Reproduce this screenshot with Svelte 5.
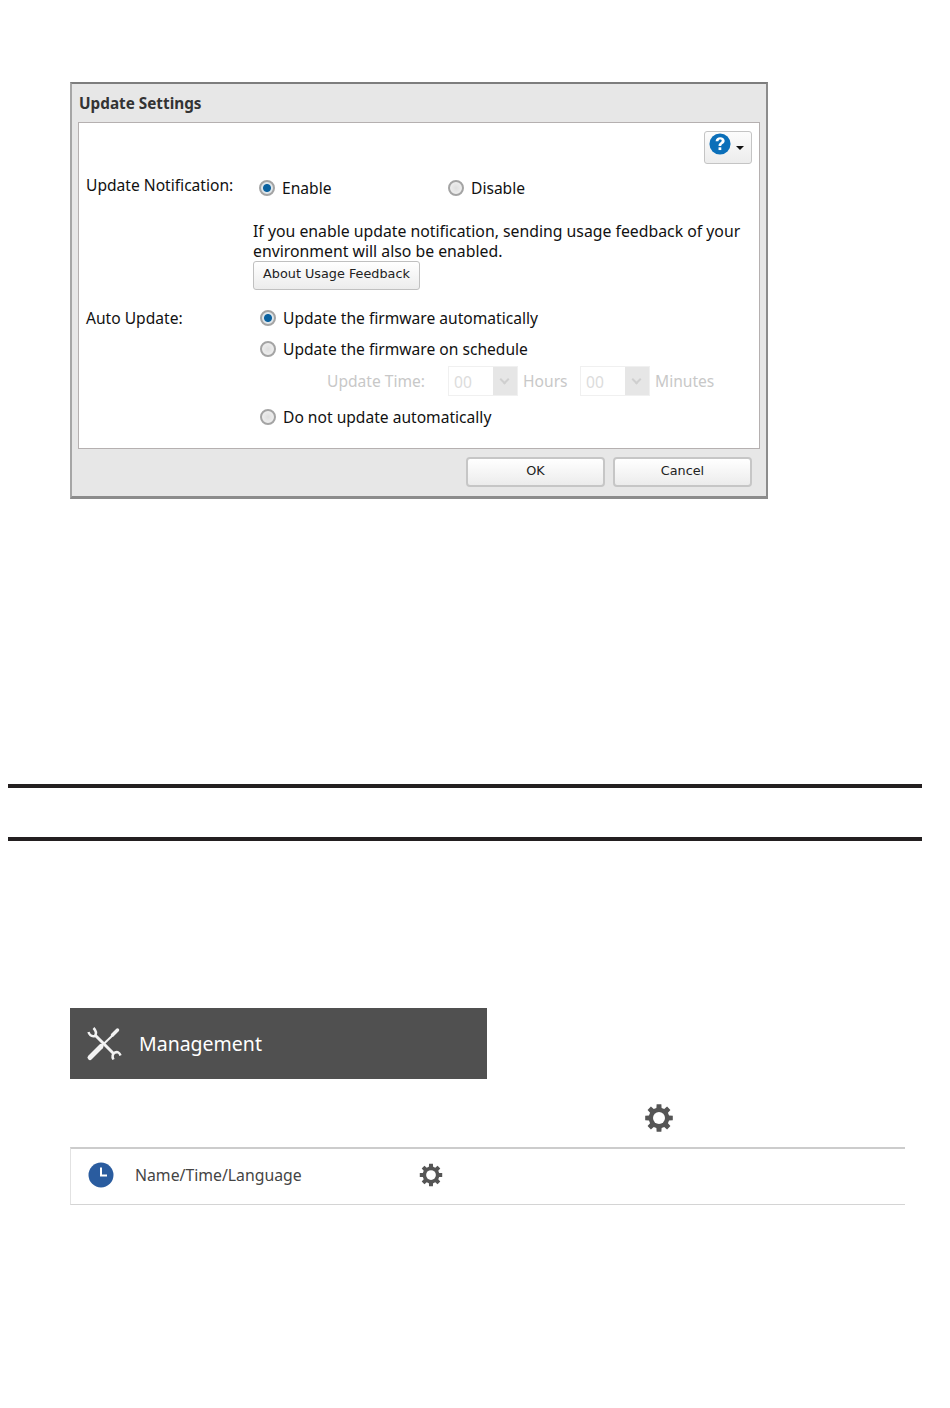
<script>
	// eight tooth gear, outer radius r, centred on 0,0
	function gearPath(r) {
		const inner = r * 0.74;
		const teeth = 8;
		const pts = [];
		for (let i = 0; i < teeth; i++) {
			const a = (i / teeth) * Math.PI * 2;
			const w = 0.17;
			pts.push([Math.cos(a - w * 1.5) * inner, Math.sin(a - w * 1.5) * inner]);
			pts.push([Math.cos(a - w) * r, Math.sin(a - w) * r]);
			pts.push([Math.cos(a + w) * r, Math.sin(a + w) * r]);
			pts.push([Math.cos(a + w * 1.5) * inner, Math.sin(a + w * 1.5) * inner]);
		}
		return "M" + pts.map((p) => p[0].toFixed(2) + " " + p[1].toFixed(2)).join("L") + "Z";
	}
	const gear = gearPath(14);
</script>

<div class="page">
	<section class="dialog">
		<h1 class="dialog_title">Update Settings</h1>
		<div class="dialog_body">
			<div class="help_row">
				<button class="help_button">
					<svg class="help_icon" width="22" height="22" viewBox="0 0 24 24">
						<circle cx="12" cy="12" r="11.5" fill="#0b6fb9" />
						<path d="M7.2 9c.2-3 2.300-4.500 5-4.500 2.900 0 4.900 1.600 4.900 3.900 0 1.800-1 2.700-2.400 3.600-1 .7-1.300 1.100-1.300 2.300h-3c0-2.200.7-3.100 2-4 1-.6 1.500-1.100 1.500-1.800 0-.8-.7-1.300-1.700-1.300s-1.800.7-1.900 1.800z" fill="#fff" />
						<rect x="10.400" y="15.600" width="3" height="3" fill="#fff" />
					</svg>
					<span class="caret"></span>
				</button>
			</div>

			<div class="form_row notification">
				<div class="field_label">Update Notification:</div>
				<div class="field_controls">
					<div class="radio_pair">
						<label class="radio_item enable"><span class="radio checked"></span>Enable</label>
						<label class="radio_item"><span class="radio"></span>Disable</label>
					</div>
					<p class="note">If you enable update notification, sending usage feedback of your environment will also be enabled.</p>
					<button class="small_button feedback">About Usage Feedback</button>
				</div>
			</div>

			<div class="form_row auto_update">
				<div class="field_label">Auto Update:</div>
				<div class="field_controls options">
					<label class="radio_item"><span class="radio checked"></span>Update the firmware automatically</label>
					<label class="radio_item"><span class="radio"></span>Update the firmware on schedule</label>
					<div class="time_row">
						<span class="time_label">Update Time:</span>
						<span class="select"><span class="select_value">00</span><span class="select_arrow"></span></span>
						<span class="unit">Hours</span>
						<span class="select"><span class="select_value">00</span><span class="select_arrow"></span></span>
						<span class="unit">Minutes</span>
					</div>
					<label class="radio_item"><span class="radio"></span>Do not update automatically</label>
				</div>
			</div>
		</div>
		<div class="dialog_footer">
			<button class="small_button action">OK</button>
			<button class="small_button action">Cancel</button>
		</div>
	</section>

	<div class="rules"></div>

	<div class="management">
		<svg width="40" height="40" viewBox="0 0 40 40">
			<g fill="none" stroke="#f2f2f2">
				<path d="M11 11 L30 30" stroke-width="3" />
				<path d="M4.500 8 Q6 13 11 12 Q13.500 8 9.500 4 M29.500 35.500 Q27 31 31 28.500 Q35 27 36.500 31.500" stroke-width="2.500" />
				<path d="M6 33.500 L17 22.500" stroke-width="5" stroke-linecap="round" />
				<path d="M17 22.500 L29 11" stroke-width="2" />
				<path d="M28.500 11 L33.500 6" stroke-width="3.500" stroke-linecap="round" />
			</g>
		</svg>
		<span>Management</span>
	</div>

	<div class="gear_line">
		<svg width="32" height="32" viewBox="-16 -16 32 32">
			<path d={gear} fill="#555" />
			<circle r="6" fill="#fff" />
		</svg>
	</div>

	<div class="setting_row">
		<svg class="clock" width="26" height="26" viewBox="0 0 26 26">
			<circle cx="13" cy="13" r="12.500" fill="#2a5c9f" />
			<path d="M13 5.500 V13.500 H19" fill="none" stroke="#fff" stroke-width="2" />
		</svg>
		<span class="setting_name">Name/Time/Language</span>
		<svg width="26" height="26" viewBox="-16 -16 32 32">
			<path d={gear} fill="#555" />
			<circle r="6" fill="#fff" />
		</svg>
	</div>
</div>

<style>
	:global(body) {
		margin: 0;
		background: #fff;
	}

	.page {
		height: 1408px;
		box-sizing: border-box;
		padding-top: 82px;
		font-family: "Noto Sans", sans-serif;
		color: #111;
		overflow: hidden;
	}

	.dialog {
		box-sizing: border-box;
		width: 698px;
		height: 417px;
		margin-left: 70px;
		display: flex;
		flex-direction: column;
		padding: 0 6px;
		background: #e7e7e7;
		border-top: 2px solid #7d7d7d;
		border-right: 2px solid #8c8c8c;
		border-bottom: 3px solid #8c8c8c;
		border-left: 2px solid #a6a6a6;
	}

	.dialog_title {
		margin: 0;
		height: 38px;
		line-height: 38px;
		font-size: 15.300px;
		font-weight: 700;
		color: #333;
		padding-left: 1px;
	}

	.dialog_body {
		box-sizing: border-box;
		height: 327px;
		background: #fff;
		border: 1px solid #b5b0b0;
		padding: 8px 7px 0 7px;
	}

	.help_row {
		display: flex;
		justify-content: flex-end;
	}

	.help_button {
		box-sizing: border-box;
		width: 48px;
		height: 33px;
		padding: 0 0 0 4px;
		display: flex;
		align-items: center;
		gap: 5px;
		background: linear-gradient(#fcfcfc, #ececec);
		border: 1px solid #c4c4c4;
		border-radius: 3px;
	}

	.help_icon {
		align-self: flex-start;
		margin-top: 1px;
	}

	.caret {
		border-left: 4px solid transparent;
		border-right: 4px solid transparent;
		border-top: 4px solid #111;
	}

	.form_row {
		display: flex;
	}

	.notification {
		margin-top: 10px;
	}

	.field_label {
		width: 167px;
		flex: none;
		font-size: 15.600px;
		line-height: 22px;
	}

	.field_controls {
		flex: 1;
		font-size: 15.600px;
	}

	.radio_pair {
		display: flex;
		margin-top: 3px;
	}

	.radio_pair .radio_item {
		width: 189px;
		margin-left: 6px;
		box-sizing: border-box;
	}

	.radio_pair .radio_item + .radio_item {
		margin-left: 0;
	}

	.radio_item {
		display: flex;
		align-items: center;
		gap: 7px;
		height: 22px;
		line-height: 22px;
	}

	.radio {
		box-sizing: border-box;
		flex: none;
		width: 16px;
		height: 16px;
		border-radius: 50%;
		border: 2px solid #a4a4a4;
		background: radial-gradient(circle, #dedede, #f4f4f4);
	}

	.radio.checked {
		background: radial-gradient(circle, #0a619f 0 3.500px, #dfe6ea 4.500px);
	}

	.note {
		margin: 22px 0 0 0;
		line-height: 20px;
		font-size: 15.800px;
	}

	.small_button {
		box-sizing: border-box;
		font-family: "DejaVu Sans", sans-serif;
		font-size: 12.800px;
		color: #222;
		background: linear-gradient(#fff, #ececec);
		border: 1px solid #c0c0c0;
		border-radius: 3px;
		padding: 0 0 4px 0;
	}

	.feedback {
		display: block;
		width: 167px;
		height: 29px;
	}

	.auto_update {
		margin-top: 17px;
	}

	.options {
		padding-left: 7px;
		display: flex;
		flex-direction: column;
	}

	.options .radio_item + .radio_item {
		margin-top: 9px;
	}

	.time_row {
		display: flex;
		align-items: center;
		height: 30px;
		margin: 6px 0 10px 0;
		padding-left: 67px;
		color: #c8c8c8;
	}

	.time_label {
		width: 121px;
		flex: none;
	}

	.select {
		box-sizing: border-box;
		display: flex;
		width: 70px;
		height: 30px;
		flex: none;
		border: 1px solid #f0f0f0;
		color: #dcdcdc;
	}

	.select_value {
		flex: 1;
		padding-left: 5px;
		line-height: 30px;
	}

	.select_arrow {
		width: 24px;
		background: #e6e6e6;
		position: relative;
	}

	.select_arrow::after {
		content: "";
		position: absolute;
		left: 8px;
		top: 9px;
		width: 5px;
		height: 5px;
		border-right: 2px solid #cfcfcf;
		border-bottom: 2px solid #cfcfcf;
		transform: rotate(45deg);
	}

	.unit {
		width: 62px;
		flex: none;
		padding-left: 5px;
		box-sizing: border-box;
	}

	.dialog_footer {
		display: flex;
		justify-content: flex-end;
		gap: 8px;
		padding-top: 8px;
		margin-right: 8px;
	}

	.action {
		width: 139px;
		height: 30px;
		border: 2px solid #c6c6c6;
		border-radius: 4px;
	}

	.rules {
		box-sizing: border-box;
		height: 57px;
		margin: 285px 28px 0 8px;
		border-top: 4px solid #231f20;
		border-bottom: 4px solid #231f20;
	}

	.management {
		box-sizing: border-box;
		width: 417px;
		height: 71px;
		margin: 167px 0 0 70px;
		padding-left: 14px;
		display: flex;
		align-items: center;
		gap: 15px;
		background: #505050;
		color: #fff;
		font-size: 19.500px;
	}

	.gear_line {
		height: 68px;
		box-sizing: border-box;
		padding: 23px 0 0 643px;
	}

	.gear_line svg {
		display: block;
	}

	.setting_row {
		box-sizing: border-box;
		width: 835px;
		height: 58px;
		margin-left: 70px;
		padding: 0 0 3px 17px;
		display: flex;
		align-items: center;
		border-top: 2px solid #ccc;
		border-bottom: 1px solid #d4d4d4;
		border-left: 1px solid #e2e2e2;
		color: #444;
		font-size: 15.800px;
	}

	.setting_name {
		width: 283px;
		flex: none;
		margin-left: 21px;
	}
</style>
